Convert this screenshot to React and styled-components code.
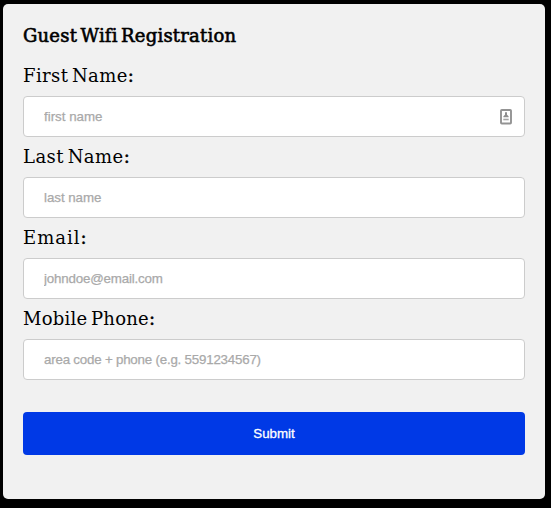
import React from 'react';
import styled, { createGlobalStyle } from 'styled-components';

const GlobalStyle = createGlobalStyle`
  * { box-sizing: border-box; }
  html, body { margin: 0; background: #000; overflow: hidden; }
`;

const Page = styled.main`
  height: 508px;
  padding: 4px 6px 9px 3px;
  background: #000;
`;

const Card = styled.form`
  display: flex;
  flex-direction: column;
  height: 495px;
  padding: 20px;
  border-radius: 5px;
  background: #f1f1f1;
  color: #000;
  font-family: 'DejaVu Serif', serif;
`;

const Title = styled.h1`
  margin: 0 0 8px;
  height: 24px;
  line-height: 24px;
  font-size: 18px;
  font-weight: 400;
  letter-spacing: 0.2px;
  word-spacing: -2.5px;
  font-variant-ligatures: none;
  white-space: nowrap;
  -webkit-text-stroke: 0.6px #000;
`;

const Label = styled.label`
  height: 40px;
  line-height: 40px;
  font-size: 18px;
  white-space: nowrap;
  word-spacing: -2.5px;
  letter-spacing: ${(p) => p.$spacing};
`;

const Colon = styled.span`
  -webkit-text-stroke: 0.5px #000;
`;

const Field = styled.div`
  display: flex;
  align-items: center;
  height: 41px;
  padding: 0 12px 0 20px;
  border: 1px solid #ccc;
  border-radius: 4px;
  background: #fff;
`;

const Input = styled.input`
  flex: 1;
  min-width: 0;
  height: 39px;
  padding: 0;
  border: 0;
  outline: 0;
  background: transparent;
  font: 13.333px 'Liberation Sans', Arial, sans-serif;
  letter-spacing: ${(p) => p.$tracking};
  &::placeholder {
    color: #a9a9a9;
    opacity: 1;
    -webkit-text-stroke: 0.25px #a9a9a9;
  }
`;

const Submit = styled.button`
  height: 43px;
  margin-top: 32px;
  padding: 0;
  border: 0;
  border-radius: 4px;
  background: #0039e6;
  color: #fff;
  font: 13.333px 'Liberation Sans', Arial, sans-serif;
  -webkit-text-stroke: 0.3px #fff;
`;

const ContactIcon = () => (
  <svg width="12" height="16" viewBox="0 0 12 16" fill="none">
    <rect x="1" y="1" width="10" height="13.5" rx="0.8" stroke="#939393" strokeWidth="1.9" />
    <path d="M5 3.3h2v2.5l1.6 1.5v1H3.4v-1L5 5.8z" fill="#8e8e8e" />
    <path d="M3.3 10.5h5.4" stroke="#a5a5a5" strokeWidth="1.6" />
  </svg>
);

const fields = [
  { id: 'first', label: 'First Name', hint: 'first name', spacing: '0.4px', tracking: '0', icon: true },
  { id: 'last', label: 'Last Name', hint: 'last name', spacing: '0.45px', tracking: '-0.05px' },
  { id: 'email', label: 'Email', hint: 'johndoe@email.com', spacing: '1px', tracking: '-0.18px' },
  { id: 'phone', label: 'Mobile Phone', hint: 'area code + phone (e.g. 5591234567)', spacing: '0.25px', tracking: '-0.21px' },
];

export default function App() {
  return (
    <Page>
      <GlobalStyle />
      <Card>
        <Title>Guest Wifi Registration</Title>
        {fields.map((f) => (
          <React.Fragment key={f.id}>
            <Label htmlFor={f.id} $spacing={f.spacing}>{f.label}<Colon>:</Colon></Label>
            <Field>
              <Input id={f.id} placeholder={f.hint} $tracking={f.tracking} />
              {f.icon && <ContactIcon />}
            </Field>
          </React.Fragment>
        ))}
        <Submit type="button">Submit</Submit>
      </Card>
    </Page>
  );
}
